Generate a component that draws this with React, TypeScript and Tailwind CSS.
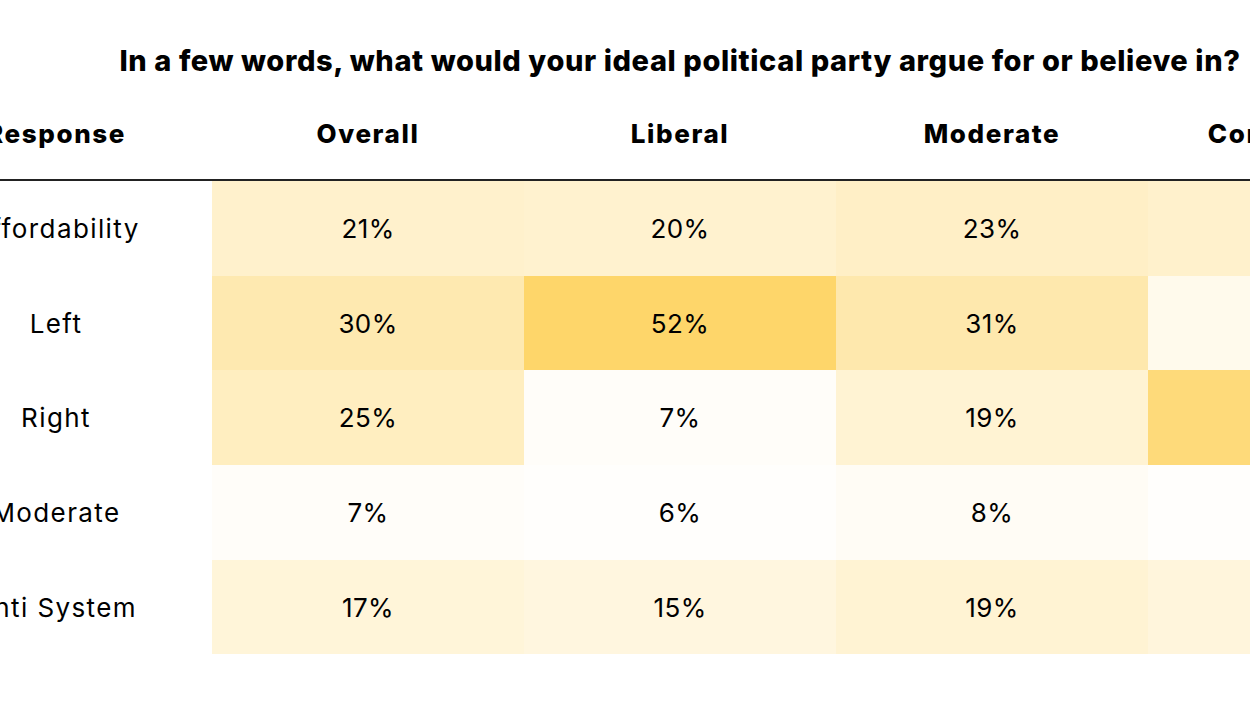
import React from 'react';

const columns = ['Overall', 'Liberal', 'Moderate', 'Conservative'];

const rows = [
  { label: 'Affordability', values: [21, 20, 23, 21] },
  { label: 'Left', values: [30, 52, 31, 11] },
  { label: 'Right', values: [25, 7, 19, 47] },
  { label: 'Moderate', values: [7, 6, 8, 6] },
  { label: 'Anti System', values: [17, 15, 19, 16] },
];

// white -> amber heat scale
const heat = (v: number) => {
  const t = Math.max(0, Math.min(1, (v - 5) / 47));
  const mix = (a: number, b: number) => Math.round(a + (b - a) * t);
  return `rgb(${mix(255, 254)}, ${mix(255, 214)}, ${mix(255, 106)})`;
};

export default function App() {
  return (
    <div
      className="w-[1250px] h-[708px] overflow-hidden bg-white text-black"
      style={{ fontFamily: 'Inter, "Noto Sans", sans-serif' }}
    >
      <div className="w-[1560px] ml-[-100px]">
        {/* Title */}
        <h1 className="pt-[43px] text-center text-[29px] leading-[36px] font-extrabold tracking-[0.6px]">
          In a few words, what would your ideal political party argue for or believe in?
        </h1>

        {/* Header */}
        <div className="grid grid-cols-5 h-[102px] pt-[39px] border-b-2 border-[#222]">
          <div className="text-center text-[26px] leading-[32px] font-extrabold tracking-[1.6px]">Response</div>
          {columns.map((c) => (
            <div key={c} className="text-center text-[26px] leading-[32px] font-extrabold tracking-[1.6px]">
              {c}
            </div>
          ))}
        </div>

        {/* Body */}
        {rows.map((row) => (
          <div key={row.label} className="grid grid-cols-5 h-[94.7px]">
            <div className="flex items-center justify-center text-[26px] tracking-[1.4px]">{row.label}</div>
            {row.values.map((v, i) => (
              <div
                key={i}
                className="flex items-center justify-center text-[26px] tracking-[0.4px]"
                style={{ backgroundColor: heat(v) }}
              >
                {v}%
              </div>
            ))}
          </div>
        ))}
      </div>
    </div>
  );
}
